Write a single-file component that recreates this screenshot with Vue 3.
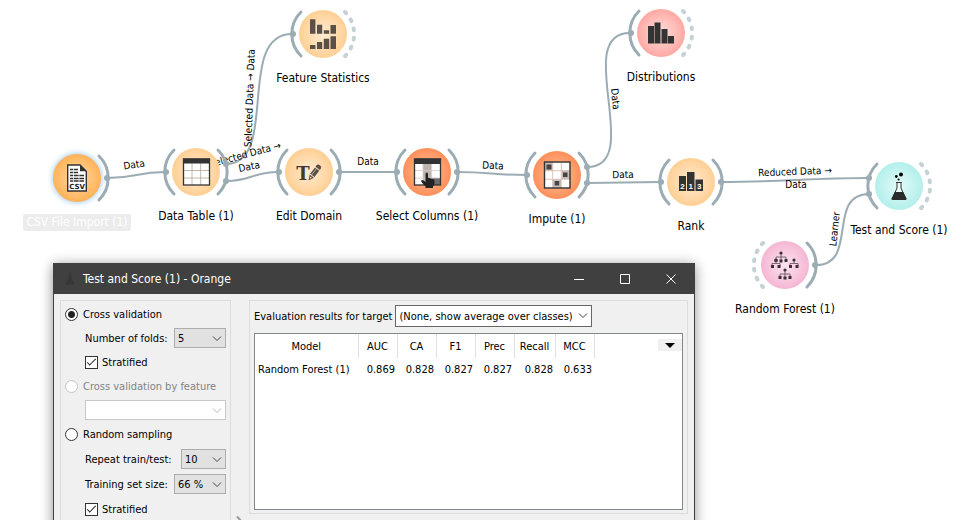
<script setup>
import { ref } from 'vue'

const nodes = [
  { id: 'csv', label: 'CSV File Import (1)', x: 77, y: 178, tone: 'amber', right: 'solid', outputs: [0], selected: true },
  { id: 'table', label: 'Data Table (1)', x: 196, y: 172, tone: 'orange', left: 'solid', right: 'solid', inputs: [0], outputs: [-8, 9] },
  { id: 'stats', label: 'Feature Statistics', x: 323, y: 34, tone: 'orange', left: 'solid', right: 'dotted', inputs: [0] },
  { id: 'edit', label: 'Edit Domain', x: 309, y: 172, tone: 'orange', left: 'solid', right: 'solid', inputs: [0], outputs: [0] },
  { id: 'columns', label: 'Select Columns (1)', x: 427, y: 172, tone: 'coral', left: 'solid', right: 'solid', inputs: [0], outputs: [0] },
  { id: 'impute', label: 'Impute (1)', x: 557, y: 175, tone: 'coral', left: 'solid', right: 'solid', inputs: [0], outputs: [-8, 8] },
  { id: 'rank', label: 'Rank', x: 691, y: 182, tone: 'orange', left: 'solid', right: 'solid', inputs: [0], outputs: [0] },
  { id: 'dist', label: 'Distributions', x: 661, y: 33, tone: 'red', left: 'solid', right: 'dotted', inputs: [0] },
  { id: 'score', label: 'Test and Score (1)', x: 899, y: 186, tone: 'teal', left: 'solid', right: 'dotted', inputs: [-8, 8] },
  { id: 'forest', label: 'Random Forest (1)', x: 785, y: 265, tone: 'pink', left: 'dotted', right: 'solid', outputs: [0] },
]

const tones = {
  amber: ['#ffdca6', '#ffb258'],
  orange: ['#ffebd3', '#ffcf94'],
  coral: ['#ffc39c', '#fd8f5a'],
  red: ['#ffe0dd', '#ffa8a3'],
  teal: ['#e2fbf8', '#b3efeb'],
  pink: ['#fce4f0', '#f5b6d3'],
}

const links = [
  'M108 178 C136 178 137 172 165 172',
  'M226 164 C280 164 235 34 292 34',
  'M226 181 C252 181 252 172 278 172',
  'M340 172 H396',
  'M457 172 C490 172 493 175 526 175',
  'M587 167 C646 167 571 33 630 33',
  'M587 183 L660 182',
  'M722 182 C780 182 811 178 869 178',
  'M816 265 C859 265 826 194 869 194',
]

const captions = [
  { text: 'Data', x: 134, y: 164, turn: -8 },
  { text: 'Selected Data → Data', x: 249, y: 98, turn: -88 },
  { text: 'Selected Data →', x: 245, y: 154, turn: -15 },
  { text: 'Data', x: 249, y: 166, turn: -11 },
  { text: 'Data', x: 368, y: 161, turn: 0 },
  { text: 'Data', x: 493, y: 165, turn: 3 },
  { text: 'Data', x: 616, y: 99, turn: 84 },
  { text: 'Data', x: 623, y: 174, turn: -1 },
  { text: 'Reduced Data →', x: 795, y: 171, turn: -2 },
  { text: 'Data', x: 796, y: 184, turn: 0 },
  { text: 'Learner', x: 834, y: 229, turn: -84 },
]

const trees = [
  { x: -4, y: -12 },
  { x: -9, y: -5 },
  { x: 9, y: -5 },
  { x: 0, y: 5 },
]

const columns = ['Model', 'AUC', 'CA', 'F1', 'Prec', 'Recall', 'MCC']
const results = [['Random Forest (1)', '0.869', '0.828', '0.827', '0.827', '0.828', '0.633']]

const method = ref('folds')
const foldsStratified = ref(true)
const samplingStratified = ref(true)
</script>

<template>
  <main class="desktop">
    <svg class="links" aria-hidden="true">
      <path v-for="d in links" :key="d" :d="d" />
      <text
        v-for="(c, i) in captions"
        :key="i"
        :transform="`translate(${c.x} ${c.y}) rotate(${c.turn})`"
        y="4"
      >{{ c.text }}</text>
    </svg>

    <div
      v-for="n in nodes"
      :key="n.id"
      class="node"
      :class="{ selected: n.selected }"
      :style="{ left: n.x + 'px', top: n.y + 'px' }"
    >
      <svg class="badge" viewBox="-36 -36 72 72" aria-hidden="true">
        <defs>
          <radialGradient :id="'tone-' + n.id">
            <stop offset="0" :stop-color="tones[n.tone][0]" />
            <stop offset="1" :stop-color="tones[n.tone][1]" />
          </radialGradient>
        </defs>
        <path v-if="n.left" class="arc" :class="n.left" d="M-22 -22 A31 31 0 0 0 -22 22" />
        <path v-if="n.right" class="arc" :class="n.right" d="M22 -22 A31 31 0 0 1 22 22" />
        <circle v-for="p in n.inputs" :key="'i' + p" class="port" cx="-30" :cy="p" r="3" />
        <circle v-for="p in n.outputs" :key="'o' + p" class="port" cx="30" :cy="p" r="3" />
        <circle class="disc" r="24" :fill="`url(#tone-${n.id})`" />

        <g v-if="n.id === 'csv'">
          <path d="M-9.3 -13 H3 L9.3 -6.700 V13 H-9.3 Z" fill="#fff" stroke="#333" stroke-width="1.4" />
          <path d="M3 -13 V-6.700 H9.300 Z" fill="#333" />
          <path d="M-7 -8.500 H1 M-7 -5.500 H1 M-7 -2.500 H7 M-7 .5 H7 M-7 3 H7" stroke="#333" stroke-width="1.500" />
          <path d="M-3.500 -10 V4 M2 -5 V4" stroke="#fff" stroke-width=".7" />
          <text class="glyph" y="10.500" font-size="7">CSV</text>
        </g>
        <g v-else-if="n.id === 'table'">
          <rect x="-12.500" y="-13" width="26" height="26" fill="#fff" />
          <path d="M-4 -9 V13 M4.700 -9 V13 M-13 -1.500 H13 M-13 6 H13" stroke="#b5a595" stroke-width=".8" />
          <rect x="-12.500" y="-13" width="26" height="26" fill="none" stroke="#333" stroke-width="1.300" />
          <rect x="-13" y="-13.500" width="27" height="5" fill="#333" />
        </g>
        <g v-else-if="n.id === 'stats'" fill="#5a5048">
          <path d="M-13 -14.700 h5.400 V-.300 h-5.400 Z M-6 -9.300 h5.200 V-.300 h-5.200 Z M.8 -3.700 h5.400 V-.300 h-5.400 Z M7.500 -9 h5.500 V-.300 h-5.500 Z" />
          <path d="M-13 11 h5.400 V15 h-5.400 Z M-6 8 h5.200 V15 h-5.200 Z M.8 4.700 h5.400 V15 h-5.400 Z M7.500 2.300 h5.500 V15 h-5.500 Z" />
        </g>
        <g v-else-if="n.id === 'edit'">
          <text class="letter" x="-6" y="8">T</text>
          <g transform="translate(-.5 8.500) rotate(37)" fill="#5a5048">
            <path d="M0 0 L-2.700 -5.500 H2.700 Z M-2.700 -6.300 V-14.300 H-1.100 V-6.300 Z M-.6 -6.300 V-14.300 H2.700 V-6.300 Z M-2.700 -15.200 V-17 Q-2.700 -19 0 -19 Q2.700 -19 2.700 -17 V-15.200 Z" />
            <path d="M-1 -3 L0 -5 L1 -3" fill="#ffe8cf" />
          </g>
        </g>
        <g v-else-if="n.id === 'columns'">
          <rect x="-12.500" y="-13" width="26" height="26" fill="#fff" />
          <rect x="-4" y="-9" width="8.500" height="22" fill="#bcb4b0" />
          <rect x="5" y="6" width="8" height="7" fill="#6b6b6b" />
          <path d="M-4 -9 V13 M4.700 -9 V13 M-13 -1.500 H13 M-13 6 H13" stroke="#dcc8bc" stroke-width=".8" />
          <rect x="-12.500" y="-13" width="26" height="26" fill="none" stroke="#333" stroke-width="1.300" />
          <rect x="-13" y="-13.500" width="27" height="5.500" fill="#333" />
          <path d="M-1.500 2 Q-1.500 .5 -.2 .5 Q1 .5 1 2 V6 Q2.300 5.300 3 6.500 Q4.300 5.800 5 7 Q7.500 6.500 7.500 9 V11 Q7.500 13 6 14.500 V16 H-1.500 V14.500 L-5.500 10 Q-6.500 8.300 -5 8 Q-3.500 8 -1.500 10 Z" fill="#222" />
        </g>
        <g v-else-if="n.id === 'impute'">
          <rect x="-12.500" y="-13" width="25.500" height="26" fill="#fff" />
          <path d="M-12.500 -13 h8 v8.500 h-8 Z M4.500 -4.500 h8.500 v8.500 h-8.500 Z M-4.500 4.500 h8.500 v8.500 h-8.500 Z" fill="#c4bfbc" />
          <path d="M-4.300 -13 V13 M4.300 -13 V13 M-13 -4.300 H13 M-13 4.300 H13" stroke="#d8b8a8" stroke-width=".8" />
          <path d="M-10.500 -10.500 h5 v5 h-5 Z M6 -2.500 h4.500 v4.500 h-4.500 Z M-2.300 6 h4.500 v4.500 h-4.500 Z" fill="#484444" />
          <rect x="-12.500" y="-13" width="25.500" height="26" fill="none" stroke="#333" stroke-width="1.400" />
        </g>
        <g v-else-if="n.id === 'rank'">
          <path d="M-12 -6 h7 V9 h-7 Z M-4 -10 h7.500 V9 h-7.500 Z M4.500 -2.500 h7.500 V9 h-7.500 Z" fill="#333" />
          <text class="glyph light" x="-8.500" y="6.500" font-size="8">2</text>
          <text class="glyph light" x="-.2" y="6.500" font-size="8">1</text>
          <text class="glyph light" x="8.200" y="6.500" font-size="8">3</text>
        </g>
        <path
          v-else-if="n.id === 'dist'"
          d="M-13 -7 h6 V10.500 h-6 Z M-6.500 -10.500 h6 V10.500 h-6 Z M.5 -4 h6 V10.500 h-6 Z M7 3 h6 V10.500 h-6 Z"
          fill="#333"
        />
        <g v-else-if="n.id === 'score'">
          <path d="M-3 -3.500 H2.800 M-2 -3.500 V2 L-6.500 12.500 Q-7 13.500 -6 13.500 H6 Q7 13.500 6.500 12.500 L2 2 V-3.500" fill="#e8fbf9" stroke="#333" stroke-width="1" />
          <path d="M-4.300 6 H4.300 L7.500 12.500 Q7.800 14 6.300 14 H-6.300 Q-7.800 14 -7.500 12.500 Z" fill="#2b2b2b" />
          <circle cx="-2.700" cy="-9.500" r="1.400" />
          <circle cx="2" cy="-11.500" r="2" />
          <circle cx="-.4" cy="-6.500" r="1.100" />
        </g>
        <g v-else>
          <g v-for="t in trees" :key="t.x + ':' + t.y" :transform="`translate(${t.x} ${t.y})`">
            <path v-if="Math.abs(t.x) < 9" d="M0 0 V7 M-5 7 V4 H5 V7" class="branch" />
            <path v-else d="M0 0 V3 M-4 6 V3.500 H4 V6" class="branch" />
            <circle r="1.600" fill="#3c3038" />
            <path v-if="Math.abs(t.x) < 9" d="M-6.500 6 h3 v3 h-3 Z M-1.500 6.500 h3 v3 h-3 Z M3.500 6 h3 v3 h-3 Z" fill="#3c3038" />
            <path v-else d="M-5 5 h3 v3 h-3 Z M1.500 5 h3 v3 h-3 Z" fill="#3c3038" />
          </g>
        </g>
      </svg>
      <span class="name">{{ n.label }}</span>
    </div>

    <section class="window" aria-label="Test and Score (1)">
      <header class="titlebar">
        <svg class="app-icon" viewBox="0 0 12 14" aria-hidden="true">
          <path d="M4.500 3 H7.500 V6 L10.500 12.500 H1.500 L4.500 6 Z" />
          <circle cx="6" cy="1.500" r="1" />
        </svg>
        <h1>Test and Score (1) - Orange</h1>
        <button type="button" aria-label="Minimize">
          <svg viewBox="0 0 12 12"><path d="M1 6.500 H11" /></svg>
        </button>
        <button type="button" aria-label="Maximize">
          <svg viewBox="0 0 12 12"><path d="M1.500 1.500 H10.500 V10.500 H1.500 Z" /></svg>
        </button>
        <button type="button" aria-label="Close">
          <svg viewBox="0 0 12 12"><path d="M1.500 1.500 L10.500 10.500 M10.500 1.500 L1.500 10.500" /></svg>
        </button>
      </header>

      <div class="content">
        <form class="panel options" @submit.prevent>
          <div class="group">
            <label class="row"><input v-model="method" type="radio" name="method" value="folds" />Cross validation</label>
            <div class="row inner">
              <label for="folds">Number of folds:</label>
              <span class="combo wide">
                <select id="folds"><option>5</option></select>
                <svg viewBox="0 0 10 6" aria-hidden="true"><path d="M1 .5 L5 4.500 L9 .5" /></svg>
              </span>
            </div>
            <label class="row inner"><input v-model="foldsStratified" type="checkbox" />Stratified</label>
          </div>
          <div class="group">
            <label class="row disabled"><input v-model="method" type="radio" name="method" value="feature" disabled />Cross validation by feature</label>
            <div class="row inner">
              <span class="combo full">
                <select aria-label="Feature" disabled><option></option></select>
                <svg viewBox="0 0 10 6" aria-hidden="true"><path d="M1 .5 L5 4.500 L9 .5" /></svg>
              </span>
            </div>
          </div>
          <div class="group loose">
            <label class="row"><input v-model="method" type="radio" name="method" value="sampling" />Random sampling</label>
            <div class="row inner">
              <label for="repeats">Repeat train/test:</label>
              <span class="combo narrow">
                <select id="repeats"><option>10</option></select>
                <svg viewBox="0 0 10 6" aria-hidden="true"><path d="M1 .5 L5 4.500 L9 .5" /></svg>
              </span>
            </div>
            <div class="row inner">
              <label for="size">Training set size:</label>
              <span class="combo wide">
                <select id="size"><option>66 %</option></select>
                <svg viewBox="0 0 10 6" aria-hidden="true"><path d="M1 .5 L5 4.500 L9 .5" /></svg>
              </span>
            </div>
            <label class="row inner"><input v-model="samplingStratified" type="checkbox" />Stratified</label>
          </div>
        </form>

        <div class="splitter">
          <svg viewBox="0 0 8 16" aria-hidden="true"><path d="M1 1.500 L7 8 L1 14.500" /></svg>
        </div>

        <div class="panel results">
          <div class="target">
            <label for="target">Evaluation results for target</label>
            <span class="combo plain">
              <select id="target"><option>(None, show average over classes)</option></select>
              <svg viewBox="0 0 10 6" aria-hidden="true"><path d="M1 .5 L5 4.500 L9 .5" /></svg>
            </span>
          </div>
          <div class="sheet">
            <table>
              <thead>
                <tr><th v-for="c in columns" :key="c" scope="col">{{ c }}</th></tr>
              </thead>
              <tbody>
                <tr v-for="r in results" :key="r[0]">
                  <td v-for="(v, i) in r" :key="i">{{ v }}</td>
                </tr>
              </tbody>
            </table>
            <button type="button" class="more" aria-label="Choose columns">
              <svg viewBox="0 0 10 5" aria-hidden="true"><path d="M0 0 H10 L5 5 Z" /></svg>
            </button>
          </div>
        </div>
      </div>
    </section>
  </main>
</template>

<style>
body {
  margin: 0;
  background: #fff;
}
</style>

<style scoped>
.desktop {
  position: relative;
  height: 100vh;
  overflow: hidden;
  font-family: "DejaVu Sans Condensed", "Noto Sans", sans-serif;
  font-size: 12px;
  color: #000;
}

.links {
  position: absolute;
  inset: 0;
  width: 100%;
  height: 100%;
}

.links path {
  fill: none;
  stroke: #9cacb4;
  stroke-width: 2;
}

.links text {
  font-size: 10px;
  text-anchor: middle;
  fill: #000;
}

.node {
  position: absolute;
  display: flex;
  flex-direction: column;
  align-items: center;
  width: 140px;
  margin: -36px 0 0 -70px;
}

.badge {
  display: block;
  width: 72px;
  height: 72px;
  overflow: visible;
}

.name {
  padding: 0 3px;
  line-height: 17px;
  border-radius: 2px;
  white-space: nowrap;
}

.selected .name {
  color: #fff;
  background: #ececec;
}

.selected .disc {
  filter: drop-shadow(0 0 3px #8cc0ec);
}

.arc {
  fill: none;
  stroke: #9cacb4;
  stroke-width: 3;
  stroke-linecap: round;
}

.arc.dotted {
  stroke: #c6d1d5;
  stroke-width: 4;
  stroke-dasharray: 1.7 7.7;
}

.port {
  fill: #9cacb4;
}

.glyph {
  font-family: "DejaVu Sans", sans-serif;
  font-weight: 700;
  text-anchor: middle;
  fill: #222;
}

.glyph.light {
  font-family: "Liberation Sans", sans-serif;
  fill: #fff;
}

.letter {
  font-family: "DejaVu Serif", serif;
  font-size: 18px;
  font-weight: 700;
  text-anchor: middle;
  fill: #40382f;
}

.branch {
  fill: none;
  stroke: #5c4c55;
  stroke-width: 0.8;
}

.window {
  position: absolute;
  top: 263px;
  left: 53px;
  right: 273px;
  border: 1px solid #404040;
  background: #f0f0f0;
  box-shadow: 0 2px 12px rgba(0, 0, 0, 0.45);
}

.titlebar {
  display: flex;
  align-items: center;
  height: 30px;
  padding-left: 10px;
  background: #404040;
  color: #fff;
}

.app-icon {
  width: 12px;
  height: 14px;
  fill: #363636;
}

.titlebar h1 {
  flex: 1;
  margin: 0 0 0 7px;
  font-size: 12px;
  font-weight: 400;
}

.titlebar button {
  display: flex;
  align-items: center;
  justify-content: center;
  width: 46px;
  height: 30px;
  padding: 0;
  border: 0;
  background: none;
}

.titlebar button svg {
  width: 12px;
  height: 12px;
  fill: none;
  stroke: #fff;
}

.content {
  display: flex;
  align-items: stretch;
  min-height: 446px;
  padding: 6px;
  font-size: 11px;
}

.panel {
  box-sizing: border-box;
  border: 1px solid #dcdcdc;
}

.options {
  display: flex;
  flex-direction: column;
  gap: 4px;
  width: 171px;
  padding: 3px 4px;
}

.group {
  display: flex;
  flex-direction: column;
  gap: 4px;
}

.group.loose {
  gap: 5px;
}

.row {
  display: flex;
  align-items: center;
  height: 20px;
  white-space: nowrap;
}

.inner {
  padding-left: 20px;
}

.disabled {
  color: #838383;
}

input {
  appearance: none;
  flex: none;
  box-sizing: border-box;
  width: 13px;
  height: 13px;
  margin: 0 5px 0 0;
  border: 1px solid #333;
  background: #fff;
}

input[type="radio"] {
  border-radius: 50%;
}

input[type="radio"]:checked {
  background: radial-gradient(circle, #222 3px, #fff 4px);
}

input[type="checkbox"] {
  display: grid;
  place-items: center;
  margin-right: 4px;
}

input[type="checkbox"]:checked::after {
  content: "";
  width: 8px;
  height: 3px;
  border: solid #222;
  border-width: 0 0 1px 1px;
  transform: translateY(-1px) rotate(-45deg);
}

input:disabled {
  border-color: #c4c4c4;
}

.combo {
  position: relative;
  height: 20px;
  margin-left: auto;
}

.combo svg {
  position: absolute;
  top: 8px;
  right: 4px;
  width: 10px;
  height: 6px;
  fill: none;
  stroke: #444;
  pointer-events: none;
}

.wide {
  width: 52px;
}

.narrow {
  width: 45px;
}

.full {
  width: 100%;
}

select {
  appearance: none;
  box-sizing: border-box;
  width: 100%;
  height: 100%;
  padding: 0 0 0 3px;
  border: 1px solid #adadad;
  border-radius: 0;
  background: #e1e1e1;
  color: #000;
  font: inherit;
}

select:disabled {
  background: #fff;
  border-color: #c8c8c8;
  opacity: 1;
}

select:disabled + svg {
  stroke: #b8b8b8;
}

.splitter {
  display: flex;
  align-items: center;
  justify-content: center;
  width: 18px;
}

.splitter svg {
  width: 8px;
  height: 16px;
  fill: none;
  stroke: #999;
  stroke-width: 2;
}

.results {
  flex: 1;
  align-self: flex-start;
  padding: 4px 4px 3px;
}

.target {
  display: flex;
  align-items: center;
  gap: 3px;
}

.combo.plain {
  height: 22px;
  width: 197px;
  margin-left: 0;
}

.plain select {
  border-color: #666;
  background: #fff;
}

.sheet {
  display: flex;
  align-items: flex-start;
  justify-content: space-between;
  min-height: 175px;
  margin-top: 6px;
  border: 1px solid #828790;
  background: #fff;
}

table {
  border-collapse: collapse;
}

th,
td {
  box-sizing: border-box;
  min-width: 39px;
  height: 23px;
  padding: 0 2px;
  font-weight: 400;
  text-align: right;
  white-space: nowrap;
}

th {
  height: 24px;
  border-right: 1px solid #e2e2e2;
  text-align: center;
}

th:first-child {
  min-width: 103px;
}

th:nth-child(6) {
  min-width: 41px;
}

td:first-child {
  padding-left: 3px;
  text-align: left;
}

.more {
  display: flex;
  align-items: center;
  justify-content: center;
  width: 24px;
  height: 12px;
  margin-top: 5px;
  padding: 0;
  border: 0;
  background: #f0f0f0;
}

.more svg {
  width: 10px;
  height: 5px;
}
</style>
